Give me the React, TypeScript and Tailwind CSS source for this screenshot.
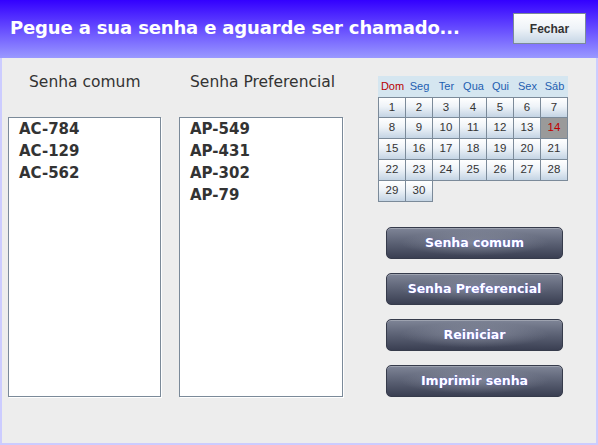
import React from 'react';

const comuns = ['AC-784', 'AC-129', 'AC-562'];
const preferenciais = ['AP-549', 'AP-431', 'AP-302', 'AP-79'];
const dias = ['Dom', 'Seg', 'Ter', 'Qua', 'Qui', 'Sex', 'Sáb'];
const numeros = Array.from({ length: 30 }, (_, i) => i + 1);
const acoes = ['Senha comum', 'Senha Preferencial', 'Reiniciar', 'Imprimir senha'];

function ListaSenhas({ itens, width }: { itens: string[]; width: string }) {
  return (
    <div
      className={`${width} h-[280px] border border-[#7b8a99] bg-white pl-[10px] shadow-[1px_1px_0_#ffffff] font-['DejaVu_Sans',sans-serif] text-[15px] font-bold leading-[22px] text-[#333333]`}
    >
      {itens.map((s) => (
        <div key={s}>{s}</div>
      ))}
    </div>
  );
}

function Calendario() {
  return (
    <div className="w-[190px] font-['Liberation_Sans',Arial,sans-serif] text-[11px]">
      <div className="grid h-[21px] grid-cols-[repeat(7,27px)] items-center bg-[#d5e6f0] pl-px">
        {dias.map((d, i) => (
          <div key={d} className={`text-center ${i === 0 ? 'text-[#b80000]' : 'text-[#1f5fb0]'}`}>
            {d}
          </div>
        ))}
      </div>
      <div className="grid grid-cols-[repeat(7,27px)] border-l border-[#7b8a99] text-[11.5px]">
        {numeros.map((n) => (
          <div
            key={n}
            className={`flex h-[21px] items-center justify-center border-r border-b border-[#7b8a99] ${
              n <= 7 ? 'border-t' : ''
            } ${
              n === 14
                ? 'bg-[#9a9a9a] text-[#c00000]'
                : 'bg-[linear-gradient(#ffffff,#eef3f8_45%,#c4d4e4)] text-[#333333]'
            }`}
          >
            {n}
          </div>
        ))}
      </div>
    </div>
  );
}

export default function App() {
  return (
    <div className="flex h-[445px] w-[598px] flex-col overflow-hidden bg-[#ededed]">
      <header className="flex h-[58px] shrink-0 items-center justify-between bg-[linear-gradient(#3300ff,#9a99ff)] pl-[10px] pr-[12px]">
        <h1 className="pb-[4px] font-['DejaVu_Sans',sans-serif] text-[18px] font-bold tracking-[-0.15px] text-white">
          Pegue a sua senha e aguarde ser chamado...
        </h1>
        <button className="mb-[1px] h-[31px] w-[73px] border border-[#7b8a99] bg-[linear-gradient(#ffffff,#eef3f8_50%,#c6d6e6)] font-['Liberation_Sans',Arial,sans-serif] text-[12px] font-bold text-[#333333]">
          Fechar
        </button>
      </header>

      <main className="flex flex-1 border-x-2 border-b-2 border-[#ccccff] pl-[6px]">
        <section className="flex w-[153px] flex-col">
          <h2 className="pl-[21px] pt-[14px] font-['DejaVu_Sans',sans-serif] text-[15.5px] leading-[20px] text-[#333333]">
            Senha comum
          </h2>
          <div className="mt-[25px]">
            <ListaSenhas itens={comuns} width="w-[153px]" />
          </div>
        </section>

        <section className="ml-[18px] flex w-[164px] flex-col">
          <h2 className="pl-[11px] pt-[14px] font-['DejaVu_Sans',sans-serif] text-[15.5px] leading-[20px] text-[#333333]">
            Senha Preferencial
          </h2>
          <div className="mt-[25px]">
            <ListaSenhas itens={preferenciais} width="w-[164px]" />
          </div>
        </section>

        <section className="ml-[35px] flex flex-col pt-[18px]">
          <Calendario />
          <div className="mt-[25px] ml-[8px] flex flex-col gap-[14px]">
            {acoes.map((a) => (
              <button
                key={a}
                className="h-[32px] w-[177px] rounded-[5px] border border-[#363b4b] bg-[radial-gradient(ellipse_at_center,rgba(170,175,190,0.45),transparent_60%),linear-gradient(#7f8597,#5b6174_50%,#3a3f52)] font-['DejaVu_Sans',sans-serif] text-[12.5px] font-bold text-white shadow-[inset_0_1px_0_rgba(255,255,255,0.25)] [text-shadow:0_0_1px_#5050ff]"
              >
                {a}
              </button>
            ))}
          </div>
        </section>
      </main>
    </div>
  );
}
